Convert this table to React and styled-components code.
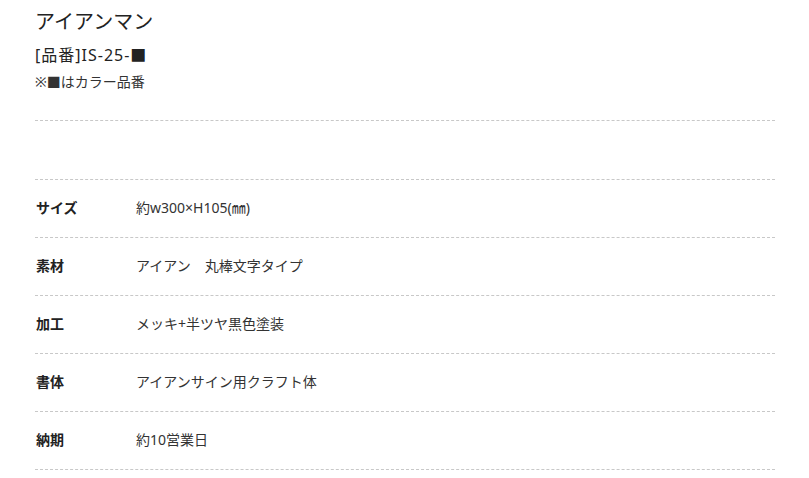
import React from 'react';
import styled, { createGlobalStyle } from 'styled-components';

const GlobalStyle = createGlobalStyle`
  body {
    margin: 0;
    background: #fff;
    font-family: "Noto Sans", "Noto Sans CJK JP", sans-serif;
    color: #333;
  }
`;

const Page = styled.div`
  width: 740px;
  padding: 6px 0 0 35px;
`;

const Title = styled.h1`
  margin: 0;
  font-size: 20px;
  font-weight: 400;
  line-height: 32px;
  color: #222;
`;

const Code = styled.p`
  margin: 2px 0 0;
  font-size: 16px;
  line-height: 30px;
  letter-spacing: 1px;
  color: #222;
`;

const Note = styled.p`
  margin: 0;
  font-size: 14px;
  line-height: 24px;
  color: #333;
`;

const Spec = styled.dl`
  margin: 26px 0 0;
  border-top: 1px dashed #c8c8c8;
`;

const Row = styled.div`
  display: flex;
  align-items: center;
  box-sizing: border-box;
  height: ${(p) => (p.$blank ? '59px' : '58px')};
  padding-bottom: 3px;
  border-bottom: 1px dashed #c8c8c8;
  font-size: 14px;
`;

const Label = styled.dt`
  width: 100px;
  flex-shrink: 0;
  font-weight: 700;
  color: #222;
  padding-left: 1px;
`;

const Value = styled.dd`
  margin: 0;
  color: #333;
`;

const specs = [
  ['', ''],
  ['サイズ', '約w300×H105(㎜)'],
  ['素材', 'アイアン　丸棒文字タイプ'],
  ['加工', 'メッキ+半ツヤ黒色塗装'],
  ['書体', 'アイアンサイン用クラフト体'],
  ['納期', '約10営業日'],
];

export default function App() {
  return (
    <>
      <GlobalStyle />
      <Page>
        <Title>アイアンマン</Title>
        <Code>[品番]IS-25-■</Code>
        <Note>※■はカラー品番</Note>
        <Spec>
          {specs.map(([label, value], i) => (
            <Row key={i} $blank={!label}>
              <Label>{label}</Label>
              <Value>{value}</Value>
            </Row>
          ))}
        </Spec>
      </Page>
    </>
  );
}
